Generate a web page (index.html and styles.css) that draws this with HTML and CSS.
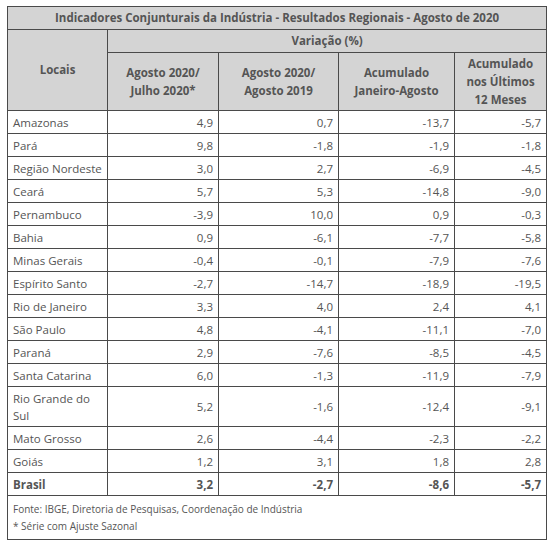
FILE: index.html
```html
<!DOCTYPE html>
<html lang="pt">
<head>
    <meta charset="UTF-8">
    <title>Indicadores Conjunturais da Indústria</title>
    <link rel="stylesheet" href="styles.css">
</head>
<body>
    <div class="wrap">
        <table class="tabela">
            <colgroup>
                <col class="c1"><col class="c2"><col class="c3"><col class="c4"><col class="c5">
            </colgroup>
            <thead>
                <tr class="titulo">
                    <th colspan="5">Indicadores Conjunturais da Indústria - Resultados Regionais - Agosto de 2020</th>
                </tr>
                <tr class="var">
                    <th rowspan="2">Locais</th>
                    <th colspan="4">Variação (%)</th>
                </tr>
                <tr class="cols">
                    <th>Agosto 2020/<br>Julho 2020*</th>
                    <th>Agosto 2020/<br>Agosto 2019</th>
                    <th>Acumulado<br>Janeiro-Agosto</th>
                    <th>Acumulado<br>nos Últimos<br>12 Meses</th>
                </tr>
            </thead>
            <tbody>
                <tr><td>Amazonas</td><td>4,9</td><td>0,7</td><td>-13,7</td><td>-5,7</td></tr>
                <tr><td>Pará</td><td>9,8</td><td>-1,8</td><td>-1,9</td><td>-1,8</td></tr>
                <tr><td>Região Nordeste</td><td>3,0</td><td>2,7</td><td>-6,9</td><td>-4,5</td></tr>
                <tr><td>Ceará</td><td>5,7</td><td>5,3</td><td>-14,8</td><td>-9,0</td></tr>
                <tr><td>Pernambuco</td><td>-3,9</td><td>10,0</td><td>0,9</td><td>-0,3</td></tr>
                <tr><td>Bahia</td><td>0,9</td><td>-6,1</td><td>-7,7</td><td>-5,8</td></tr>
                <tr><td>Minas Gerais</td><td>-0,4</td><td>-0,1</td><td>-7,9</td><td>-7,6</td></tr>
                <tr><td>Espírito Santo</td><td>-2,7</td><td>-14,7</td><td>-18,9</td><td>-19,5</td></tr>
                <tr><td>Rio de Janeiro</td><td>3,3</td><td>4,0</td><td>2,4</td><td>4,1</td></tr>
                <tr><td>São Paulo</td><td>4,8</td><td>-4,1</td><td>-11,1</td><td>-7,0</td></tr>
                <tr><td>Paraná</td><td>2,9</td><td>-7,6</td><td>-8,5</td><td>-4,5</td></tr>
                <tr><td>Santa Catarina</td><td>6,0</td><td>-1,3</td><td>-11,9</td><td>-7,9</td></tr>
                <tr class="dupla"><td>Rio Grande do<br>Sul</td><td>5,2</td><td>-1,6</td><td>-12,4</td><td>-9,1</td></tr>
                <tr><td>Mato Grosso</td><td>2,6</td><td>-4,4</td><td>-2,3</td><td>-2,2</td></tr>
                <tr><td>Goiás</td><td>1,2</td><td>3,1</td><td>1,8</td><td>2,8</td></tr>
                <tr class="total"><td>Brasil</td><td>3,2</td><td>-2,7</td><td>-8,6</td><td>-5,7</td></tr>
            </tbody>
            <tfoot>
                <tr>
                    <td colspan="5">
                        <p>Fonte: IBGE, Diretoria de Pesquisas, Coordenação de Indústria</p>
                        <p>* Série com Ajuste Sazonal</p>
                    </td>
                </tr>
            </tfoot>
        </table>
    </div>
</body>
</html>
```

FILE: styles.css
```css
body { margin: 0; background: #fff; font-family: "Open Sans", Arial, sans-serif; color: #555; }
.wrap { padding: 6px 0 0 7px; }
.tabela { width: 540px; border-collapse: collapse; table-layout: fixed; font-size: 11.5px; }
.c1 { width: 100px; }
.c2 { width: 111px; }
.c3 { width: 120px; }
.c4 { width: 116px; }
.c5 { width: 92px; }
th, td { border: 1px solid #4a4a4a; }
th { background: #d4d4d4; font-weight: bold; color: #555; line-height: 18px; padding: 0 4px; }
.titulo th { height: 22px; }
.var th { height: 22px; }
.cols th { height: 57px; }
tbody td { height: 22px; padding: 0 5px; line-height: 17px; text-align: right; }
tbody td:first-child { text-align: left; padding-left: 5px; padding-right: 2px; white-space: nowrap; }
.dupla td { height: 39px; }
.total td { font-weight: bold; }
tfoot td { padding: 5px 5px 4px; font-size: 10px; line-height: 17px; }
tfoot p { margin: 0; }
```
